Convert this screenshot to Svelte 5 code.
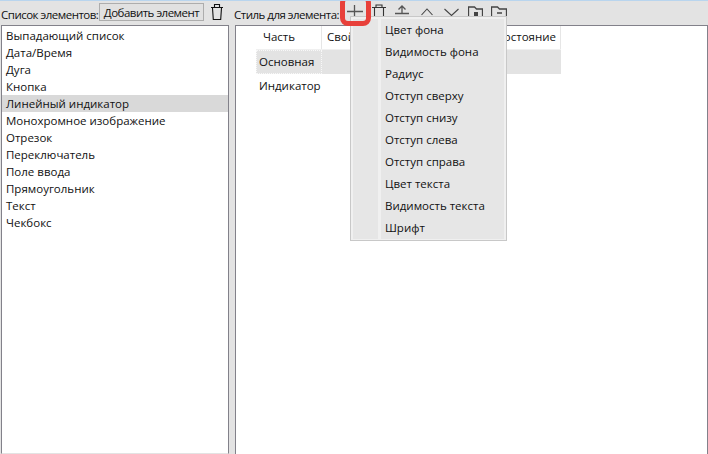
<script>
  const items = ['Выпадающий список','Дата/Время','Дуга','Кнопка','Линейный индикатор','Монохромное изображение','Отрезок','Переключатель','Поле ввода','Прямоугольник','Текст','Чекбокс'];
  const menu = ['Цвет фона','Видимость фона','Радиус','Отступ сверху','Отступ снизу','Отступ слева','Отступ справа','Цвет текста','Видимость текста','Шрифт'];
</script>

<div class="win">
  <div class="toolbar">
    <div class="left-tools">
      <span class="label">Список элементов:</span>
      <span class="btn">Добавить элемент</span>
      <svg class="trash" width="12" height="16" viewBox="0 0 12 16"><path d="M0 3.500h12M3.500 3V.5h5V3M1.500 4l.8 11.500h7.400L10.500 4" fill="none" stroke="#111" stroke-width="1.1"/></svg>
    </div>
    <div class="right-tools">
      <span class="label">Стиль для элемента:</span>
      <svg class="ic plus" width="16" height="16" viewBox="0 0 16 16"><path d="M0 7.500h16M7.500 1v15" stroke="#555" stroke-width="1.3" fill="none"/></svg>
      <svg class="ic t2" width="14" height="16" viewBox="0 0 14 16"><path d="M0 3.500h14M4 3V1h6v2M2.500 4v12M11.500 4v12" stroke="#333" stroke-width="1.1" fill="none"/></svg>
      <svg class="ic t3" width="14" height="16" viewBox="0 0 14 16"><path d="M0 9.500h14M7 9V2.500M3.500 5.500L7 2l3.500 3.500" stroke="#555" stroke-width="1.3" fill="none"/></svg>
      <svg class="ic t4" width="12" height="16" viewBox="0 0 12 16"><path d="M.5 11L6 5l5.500 6" stroke="#444" stroke-width="1.1" fill="none"/></svg>
      <svg class="ic t5" width="15" height="16" viewBox="0 0 15 16"><path d="M.5 5l7 6.500 7-6.500" stroke="#444" stroke-width="1.1" fill="none"/></svg>
      <svg class="ic t6" width="15" height="16" viewBox="0 0 15 16"><path d="M.5 16V3h6l2 2h6v11" stroke="#444" stroke-width="1.3" fill="none"/><rect x="6" y="8" width="4" height="4" fill="#444"/></svg>
      <svg class="ic t7" width="16" height="16" viewBox="0 0 16 16"><path d="M.5 16V3h6l2 2h7v11M6 9h5" stroke="#444" stroke-width="1.3" fill="none"/></svg>
    </div>
  </div>

  <div class="panes">
    <ul class="list">
      {#each items as it, i}
        <li class:sel={i === 4}>{it}</li>
      {/each}
    </ul>
    <div class="table-pane">
      <div class="row head">
        <span class="c c1">Часть</span>
        <span class="c c2">Свойство</span>
        <span class="c c3"></span>
        <span class="c c4">Состояние</span>
      </div>
      <div class="row body sel">
        <span class="c c1 focus">Основная</span>
      </div>
      <div class="row body">
        <span class="c c1">Индикатор</span>
      </div>
    </div>
  </div>

  <div class="menu">
    {#each menu as m}
      <div class="mi">{m}</div>
    {/each}
  </div>
  <div class="hl"></div>
</div>

<style>
  :global(body) { margin: 0; background: #e3e3e3; }
  .win {
    position: relative;
    width: 708px; height: 454px; box-sizing: border-box;
    overflow: hidden;
    background: #e3e3e3;
    border-top: 1px solid #b9d5ee;
    font: 11.5px "Open Sans", "Noto Sans", sans-serif;
    color: #111;
    display: flex; flex-direction: column;
  }
  .toolbar { height: 24px; flex: none; display: flex; letter-spacing: -0.5px; }
  .left-tools { width: 234px; flex: none; display: flex; align-items: center; padding-left: 1px; box-sizing: border-box; }
  .right-tools { flex: 1; display: flex; align-items: center; }
  .label { white-space: nowrap; position: relative; top: 1px; }
  .left-tools .label { width: 95px; }
  .right-tools .label { width: 105px; }
  .btn {
    margin-left: 3px; width: 105px; height: 18px; box-sizing: border-box;
    border: 1px solid #adadad; background: #e1e1e1;
    display: flex; align-items: center; justify-content: center; white-space: nowrap;
    position: relative; top: -1px;
  }
  .trash { margin-left: 7px; position: relative; top: -1px; }
  .ic { flex: none; position: relative; top: -1px; }
  .plus { margin-left: 8px; }
  .t2 { margin-left: 9px; }
  .t3 { margin-left: 9px; }
  .t4 { margin-left: 12px; }
  .t5 { margin-left: 11px; }
  .t6 { margin-left: 9px; }
  .t7 { margin-left: 8px; }
  .panes { flex: 1; display: flex; min-height: 0; padding-left: 1px; }
  .list {
    width: 228px; margin: 0 6px 0 0; padding: 0; list-style: none; flex: none;
    box-sizing: border-box; background: #fff;
    border: 1px solid #82818a; border-bottom-color: #e3e3e3; padding-top: 1px;
  }
  .list li { height: 17px; line-height: 18px; padding-left: 4px; white-space: nowrap; }
  .list li.sel { background: #d9d9d9; }
  .table-pane {
    flex: 1; background: #fff; box-sizing: border-box;
    border: 1px solid #82818a; border-bottom: 0; padding-left: 20px;
  }
  .row { display: flex; width: 305px; }
  .head { height: 24px; box-sizing: border-box; border-bottom: 1px solid #f0f0f0; }
  .head .c { border-right: 1px solid #e6e6e6; line-height: 22px; padding-left: 5px; }
  .head .c1 { padding-left: 7px; }
  .head .c4 { padding-left: 0; padding-right: 4px; text-align: right; }
  .body { height: 24px; }
  .sel { background: #e3e3e3; }
  .c { box-sizing: border-box; white-space: nowrap; flex: none; }
  .c1 { width: 66px; }
  .c2 { width: 80px; }
  .c3 { width: 80px; }
  .c4 { width: 79px; }
  .body .c1 { line-height: 23px; padding-left: 3px; width: 66px; }
  .focus { outline: 1px dotted #f8f8f8; outline-offset: -1px; }
  .hl {
    position: absolute; left: 340px; top: -6px; width: 31px; height: 31px; box-sizing: border-box;
    border: 5px solid #e8403a; border-radius: 8px;
  }
  .menu {
    position: absolute; left: 350px; top: 15px; width: 157px; box-sizing: border-box;
    background: #f0f0f0; border: 1px solid #c8c8c8; padding: 2px 2px 1px;
  }
  .mi {
    height: 22px; line-height: 21px; padding-left: 32px; white-space: nowrap;
    background: linear-gradient(to right, #e6e6e6 25px, #f0f0f0 25px, #f0f0f0 28px, #e6e6e6 28px);
  }
</style>
